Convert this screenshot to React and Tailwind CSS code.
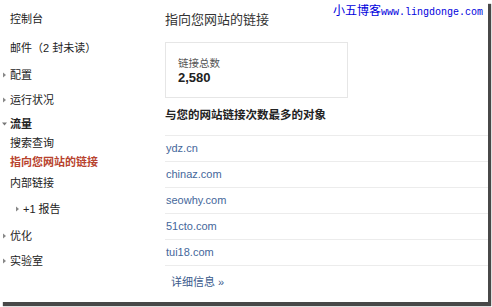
import React from "react";

const font = { fontFamily: '"Liberation Sans", Arial, "Noto Sans CJK SC", sans-serif' };

const links = ["ydz.cn", "chinaz.com", "seowhy.com", "51cto.com", "tui18.com"];

function Arrow({ down }) {
  return (
    <svg width="8" height="8" viewBox="0 0 8 8" className="inline-block align-middle mr-[1px] -mt-[2px]">
      {down ? <path d="M1 2.5 L6 2.5 L3.5 5.5 Z" fill="#777" /> : <path d="M2 1.5 L5 4 L2 6.5 Z" fill="#888" />}
    </svg>
  );
}

export default function App() {
  return (
    <div className="w-[492px] h-[307px] bg-white overflow-hidden relative" style={font}>
      <div className="w-[488px] h-[302px] bg-white shadow-[3px_4px_1px_rgba(40,40,40,0.85)] flex">
        {/* sidebar */}
        <div className="w-[150px] shrink-0 pt-[9px] text-[11px] text-[#222]">
          <div className="h-[20px] leading-[20px] pl-[10px]">控制台</div>
          <div className="h-[20px] leading-[20px] pl-[10px] mt-[9px]">邮件（2 封未读）</div>
          <div className="h-[20px] leading-[20px] pl-[1px] mt-[7px]"><Arrow />配置</div>
          <div className="h-[20px] leading-[20px] pl-[1px] mt-[5px]"><Arrow />运行状况</div>
          <div className="h-[19px] leading-[19px] pl-[1px] mt-[5px] font-bold"><Arrow down />流量</div>
          <div className="h-[19px] leading-[19px] pl-[10px]">搜索查询</div>
          <div className="h-[19px] leading-[19px] pl-[10px] font-bold text-[#b8432e]">指向您网站的链接</div>
          <div className="h-[20px] leading-[20px] pl-[10px] mt-[1px]">内部链接</div>
          <div className="h-[20px] leading-[20px] pl-[14px] mt-[6px]"><Arrow />+1 报告</div>
          <div className="h-[20px] leading-[20px] pl-[1px] mt-[7px]"><Arrow />优化</div>
          <div className="h-[20px] leading-[20px] pl-[1px] mt-[5px]"><Arrow />实验室</div>
        </div>

        {/* main */}
        <div className="flex-1 pl-[15px] pt-[10px]">
          <div className="h-[20px] leading-[20px] text-[13px] text-[#333]">指向您网站的链接</div>
          <div className="mt-[12px] w-[183px] h-[56px] border border-[#e6e6e6] pl-[12px] pt-[13px]">
            <div className="text-[10.5px] leading-[14px] text-[#555]">链接总数</div>
            <div className="text-[13px] leading-[16px] font-bold text-[#222]">2,580</div>
          </div>
          <div className="mt-[8px] h-[18px] leading-[18px] text-[11.5px] font-bold text-[#222]">
            与您的网站链接次数最多的对象
          </div>
          <div className="mt-[11px]">
            {links.map((l) => (
              <div
                key={l}
                className="h-[26px] leading-[25px] border-t border-[#ececec] pl-[1px] text-[11px] text-[#45679b]"
              >
                {l}
              </div>
            ))}
            <div className="h-[32px] leading-[33px] border-t border-[#ececec] pl-[6px] text-[11px] text-[#3a5a8c]">
              详细信息 »
            </div>
          </div>
        </div>
      </div>

      <div className="absolute left-[333px] top-[2px] h-[16px] leading-[16px] text-[#0000dd] whitespace-nowrap">
        <span className="text-[12px]" style={{ fontFamily: '"Noto Sans CJK SC", sans-serif' }}>小五博客</span>
        <span className="text-[10px]" style={{ fontFamily: '"Liberation Mono", monospace' }}>www.lingdonge.com</span>
      </div>
    </div>
  );
}
